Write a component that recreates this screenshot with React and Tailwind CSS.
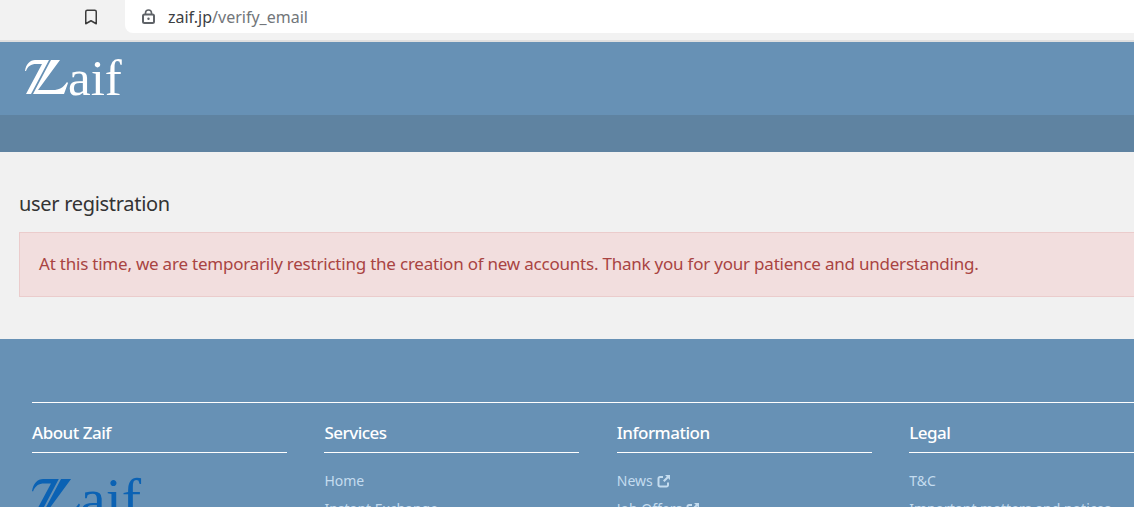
import { Bookmark } from 'lucide-react';

const ExternalIcon = ({ className }) => (
  <svg className={className} viewBox="0 0 14 14" fill="none">
    <path d="M6 3H3a1.5 1.5 0 0 0-1.5 1.5v6.5A1.5 1.5 0 0 0 3 12.5h6.5A1.5 1.5 0 0 0 11 11V8.5" stroke="currentColor" strokeWidth="2" />
    <path d="M8 1h5v5l-1.8-1.8L7.5 8 6 6.5l3.8-3.7z" fill="currentColor" />
  </svg>
);

const Logo = ({ color, className = '', markClass, textClass }) => (
  <div className={`flex items-end ${className}`} style={{ color }}>
    <svg className={`shrink-0 ${markClass}`} viewBox="0 0 43 36" preserveAspectRatio="none" fill="currentColor">
      <path d="M0 12C1 5 5 1 10 1h14L6 35H1L17 5h-6C6 5 3 7 1 12z" />
      <path d="M26 1h9L13 31h15c6 0 10-2 14-8l1 1-4 11H8z" />
    </svg>
    <span className={`font-['Liberation_Serif',serif] leading-none ${textClass}`}>aif</span>
  </div>
);

const FooterColumn = ({ title, children }) => (
  <div>
    <h3 className="border-b border-white pb-[7px] text-[17px] font-medium leading-[24px] tracking-[-0.5px] text-white">{title}</h3>
    <ul className="mt-[18px] space-y-[9px] text-[14px] leading-[19px] text-[#c4dcef]">{children}</ul>
  </div>
);

export default function App() {
  return (
    <div className="h-[507px] w-[1134px] overflow-hidden bg-[#f1f1f1] font-['Noto_Sans',sans-serif]">
      {/* browser bar */}
      <div className="flex h-[40px] bg-[#f2f2f2]">
        <div className="flex w-[125px] justify-end pr-[25px] pt-[8px] text-[#3c3c3c]">
          <Bookmark size={18} strokeWidth={2} />
        </div>
        <div className="flex h-[33px] flex-1 items-center rounded-bl-lg bg-white pl-[16px] text-[16px]">
          <svg className="h-[15px] w-[15px] text-[#5f6368]" viewBox="0 0 15 15" fill="none">
            <rect x="2" y="5.5" width="11" height="8.5" rx="1.5" stroke="currentColor" strokeWidth="2" />
            <path d="M4.5 5.5V4a3 3 0 0 1 6 0v1.5" stroke="currentColor" strokeWidth="1.6" />
            <circle cx="7.5" cy="9.7" r="1.2" fill="currentColor" />
          </svg>
          <span className="ml-[12px] text-[#3c4043]">zaif.jp</span>
          <span className="text-[#72767a]">/verify_email</span>
        </div>
      </div>
      <div className="h-[2px] bg-[#dfdfdf]" />

      {/* header */}
      <header className="h-[73px] bg-[#6791b5] pl-[25px] pt-[17px]">
        <Logo
          color="#ffffff"
          className="h-[36px]"
          markClass="h-[36px] w-[43px]"
          textClass="-mb-[9px] text-[51px]"
        />
      </header>
      <div className="h-[37px] bg-[#5f83a1]" />

      {/* main */}
      <main className="h-[187px] pl-[19px] pt-[38px]">
        <h2 className="text-[20px] leading-[28px] tracking-[-0.3px] text-[#333333]">user registration</h2>
        <div className="mt-[14px] h-[65px] w-[1200px] border border-[#ebcccc] bg-[#f2dede] pl-[19px] text-[17px] leading-[62px] tracking-[-0.22px] text-[#a94442]">
          At this time, we are temporarily restricting the creation of new accounts. Thank you for your patience and understanding.
        </div>
      </main>

      {/* footer */}
      <footer className="h-[300px] bg-[#6791b5] pl-[32px] pt-[63px]">
        <div className="w-[1200px] border-t border-white pt-[18px]">
          <div className="grid grid-cols-[255px_255px_255px_255px] gap-x-[37.4px]">
            <div>
              <h3 className="border-b border-white pb-[7px] text-[17px] font-medium leading-[24px] tracking-[-0.5px] text-white">About Zaif</h3>
              <Logo
                color="#0b62b4"
                className="mt-[25px] h-[40px]"
                markClass="h-[40px] w-[48px]"
                textClass="-mb-[10px] text-[58px]"
              />
            </div>
            <FooterColumn title="Services">
              <li>Home</li>
              <li>Instant Exchange</li>
            </FooterColumn>
            <FooterColumn title="Information">
              <li className="flex items-center gap-[4px]">News <ExternalIcon className="h-[14px] w-[14px]" /></li>
              <li className="flex items-center gap-[4px]">Job Offers <ExternalIcon className="h-[14px] w-[14px]" /></li>
            </FooterColumn>
            <FooterColumn title="Legal">
              <li>T&amp;C</li>
              <li>Important matters and notices</li>
            </FooterColumn>
          </div>
        </div>
      </footer>
    </div>
  );
}
